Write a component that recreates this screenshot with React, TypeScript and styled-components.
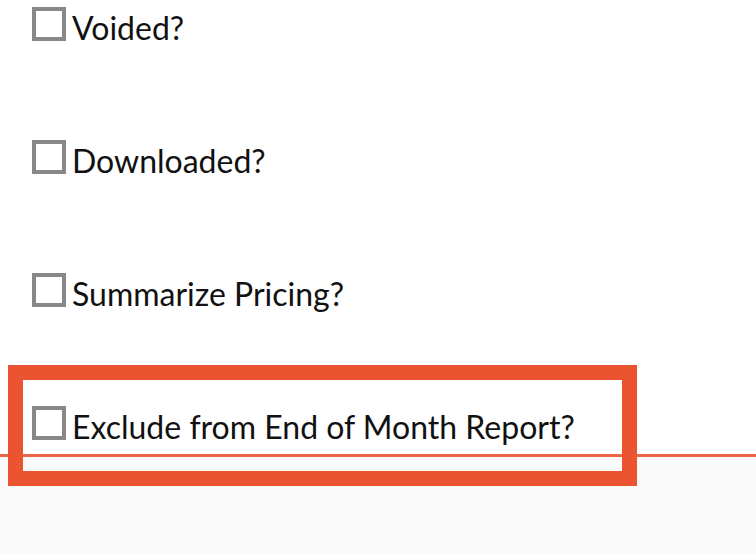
import React from "react";
import styled, { createGlobalStyle } from "styled-components";

const GlobalStyle = createGlobalStyle`
  html, body {
    margin: 0;
    padding: 0;
    background: #fff;
  }
  body {
    font-family: "Lato", "Noto Sans", sans-serif;
    color: #111;
  }
`;

const Page = styled.div`
  width: 756px;
  height: 554px;
  display: flex;
  flex-direction: column;
  overflow: hidden;
`;

const Form = styled.div`
  height: 454px;
  box-sizing: border-box;
  padding: 7px 0 0 32px;
  display: flex;
  flex-direction: column;
  gap: 99px;
  background: #fff;
`;

const Row = styled.label`
  position: relative;
  display: flex;
  align-items: center;
  gap: 6px;
  height: 34px;
  font-size: 32px;
  line-height: 34px;
  cursor: pointer;
`;

const Box = styled.input.attrs({ type: "checkbox" })`
  appearance: none;
  margin: 0;
  width: 34px;
  height: 34px;
  box-sizing: border-box;
  border: 4px solid #888;
  background: #fff;
  flex-shrink: 0;
`;

const Text = styled.span`
  padding-top: 8px;
  white-space: nowrap;
`;

const Highlight = styled.div`
  position: absolute;
  left: -24px;
  top: -41px;
  width: 629px;
  height: 121px;
  box-sizing: border-box;
  border: 15px solid #ea5430;
  z-index: 2;
  pointer-events: none;
`;

const Footer = styled.div`
  flex: 1;
  border-top: 3px solid #ed6547;
  background: #fafafa;
`;

const options = [
  "Voided?",
  "Downloaded?",
  "Summarize Pricing?",
  "Exclude from End of Month Report?",
];

export default function App() {
  return (
    <>
      <GlobalStyle />
      <Page>
        <Form>
          {options.map((label, i) => (
            <Row key={label}>
              <Box />
              <Text>{label}</Text>
              {i === options.length - 1 && <Highlight />}
            </Row>
          ))}
        </Form>
        <Footer />
      </Page>
    </>
  );
}
